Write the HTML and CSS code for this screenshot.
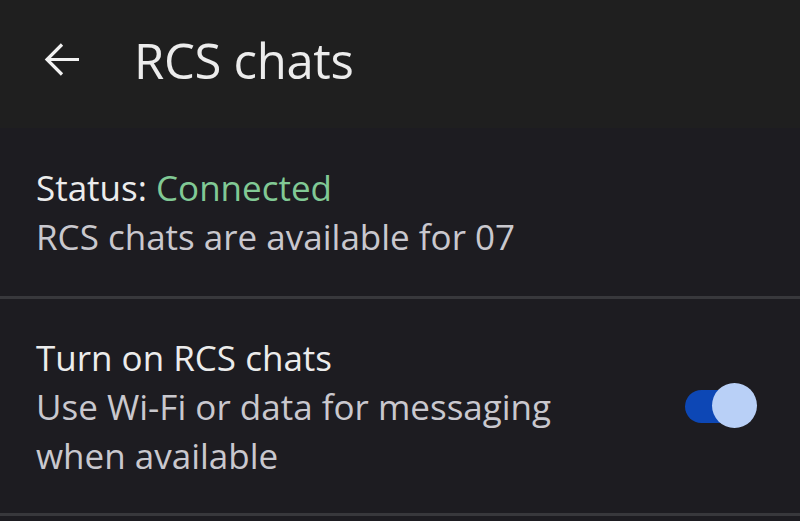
FILE: index.html
```html
<!DOCTYPE html>
<html lang="en">
<head>
    <meta charset="UTF-8">
    <meta name="viewport" content="width=device-width, initial-scale=1.0">
    <title>RCS chats</title>
    <link rel="stylesheet" href="styles.css">
</head>
<body>
    <header class="top-bar">
        <button class="back-btn" aria-label="Back">
            <svg width="36" height="36" viewBox="0 0 36 36">
                <path d="M35 17.5H3 M18 2.5L3 17.5L18 32.5" fill="none" stroke="#f1f1f1" stroke-width="3.2"/>
            </svg>
        </button>
        <h1 class="title">RCS chats</h1>
    </header>

    <main class="settings">
        <div class="setting-row">
            <div class="setting-text">
                <div class="setting-title">Status: <span class="connected">Connected</span></div>
                <div class="setting-summary">RCS chats are available for 07</div>
            </div>
        </div>

        <div class="setting-row toggle-row">
            <div class="setting-text">
                <div class="setting-title">Turn on RCS chats</div>
                <div class="setting-summary">Use Wi-Fi or data for messaging<br>when available</div>
            </div>
            <div class="switch on">
                <span class="track"></span>
                <span class="thumb"></span>
            </div>
        </div>
    </main>
</body>
</html>
```

FILE: styles.css
```css
/* Page base */
body {
    margin: 0;
    background-color: #1d1c21;
    color: #ececec;
    font-family: "Open Sans", Roboto, sans-serif;
}

/* Top app bar */
.top-bar {
    display: flex;
    align-items: center;
    height: 120px;
    padding-left: 44px;
    padding-bottom: 8px;
    background-color: #1f1f1f;
}

.back-btn {
    display: flex;
    padding: 0;
    border: none;
    background: none;
}

.title {
    margin: 0 0 0 54px;
    font-size: 49px;
    font-weight: 400;
    color: #ececec;
    letter-spacing: -0.3px;
}

/* Settings list */
.setting-row {
    display: flex;
    align-items: center;
    padding: 0 36px;
    border-bottom: 3px solid #38383c;
}

.setting-row:first-child {
    height: 168px;
}

.toggle-row {
    height: 214px;
}

.setting-text {
    flex: 1;
    font-size: 35px;
    line-height: 49px;
}

.setting-title {
    color: #ececec;
}

.connected {
    color: #81c995;
}

.setting-summary {
    color: #c9c8ce;
}

/* Switch */
.switch {
    position: relative;
    width: 72px;
    height: 46px;
    margin-right: 7px;
}

.track {
    position: absolute;
    left: 0;
    top: 7px;
    width: 66px;
    height: 33px;
    border-radius: 17px;
    background-color: #0d47b5;
}

.thumb {
    position: absolute;
    right: 0;
    top: 0;
    width: 45px;
    height: 45px;
    border-radius: 50%;
    background-color: #b9d0f7;
}
```
